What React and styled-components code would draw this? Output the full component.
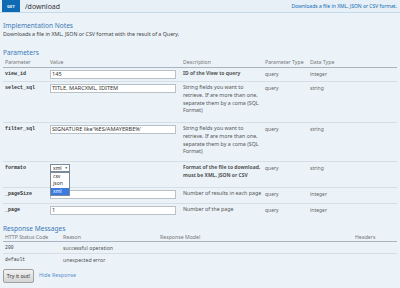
import React from "react";
import styled, { createGlobalStyle } from "styled-components";

const Global = createGlobalStyle`
  html, body { margin: 0; padding: 0; background: #ebf3f9; }
  body { font-family: "Noto Sans", "Open Sans", sans-serif; color: #444; }
  * { box-sizing: border-box; }
`;

const Page = styled.div`
  width: 400px;
  height: 288px;
  background: #ebf3f9;
  overflow: hidden;
`;

const Heading = styled.div`
  display: flex;
  align-items: center;
  height: 13px;
  background: #e7f0f7;
  border-bottom: 1px solid #c3d9ec;
  padding-right: 3px;
`;

const Badge = styled.span`
  display: flex;
  align-items: center;
  justify-content: center;
  width: 18px;
  height: 12px;
  margin-left: 2px;
  background: #0f6ab4;
  color: #fff;
  font-size: 4px;
  font-weight: bold;
  letter-spacing: 0.2px;
`;

const Path = styled.span`
  margin-left: 5px;
  font-size: 7px;
  color: #333;
  flex: 1;
`;

const Summary = styled.span`
  font-size: 5px;
  color: #0f6ab4;
`;

const Content = styled.div`
  padding: 9px 3px 0 3px;
`;

const SectionTitle = styled.div`
  font-size: 6.6px;
  line-height: 8px;
  color: #3c78b5;
  margin-top: ${(p) => p.$mt || 0}px;
`;

const Note = styled.div`
  font-size: 5.3px;
  line-height: 8px;
  color: #444;
`;

const ParamGrid = styled.div`
  display: grid;
  grid-template-columns: 47px 133px 82px 45px 1fr;
  height: ${(p) => p.$h}px;
  border-bottom: 1px solid ${(p) => (p.$head ? "#a9b4be" : p.$last ? "transparent" : "#d6dee6")};
  align-items: ${(p) => (p.$head ? "center" : "start")};
  padding-top: ${(p) => (p.$head ? 0 : 2)}px;
  position: relative;
`;

const HeadCell = styled.div`
  font-size: 5.2px;
  color: #777;
  padding-left: ${(p) => p.$pl || 0}px;
`;

const Name = styled.div`
  font-family: "Liberation Mono", "DejaVu Sans Mono", monospace;
  font-size: 5px;
  font-weight: bold;
  color: #333;
  line-height: 9px;
  padding-left: 2px;
`;

const Input = styled.div`
  width: 126px;
  height: 9px;
  background: #fff;
  border: 1px solid #b8c0c8;
  font-size: 5.6px;
  line-height: 7px;
  padding-left: 1px;
  color: #333;
  white-space: nowrap;
`;

const Desc = styled.div`
  font-size: ${(p) => (p.$bold ? 5 : 5.3)}px;
  line-height: 7.8px;
  color: #555;
  font-weight: ${(p) => (p.$bold ? "bold" : "normal")};
`;

const Cell = styled.div`
  font-size: 5px;
  line-height: 9px;
  color: #666;
`;

const SelectBox = styled.div`
  width: 20px;
  height: 8px;
  background: #fff;
  border: 1px solid #7a8a99;
  font-size: 5px;
  line-height: 6px;
  padding-left: 2px;
  color: #222;
  display: flex;
  gap: 3px;
  position: relative;
`;

const Arrow = styled.span`
  font-size: 3px;
  line-height: 6px;
`;

const Options = styled.div`
  position: absolute;
  left: -1px;
  top: 7px;
  width: 20px;
  background: #fff;
  border: 1px solid #7a8a99;
  z-index: 2;
`;

const Option = styled.div`
  font-size: 5px;
  line-height: 7.3px;
  padding-left: 2px;
  color: ${(p) => (p.$sel ? "#fff" : "#333")};
  background: ${(p) => (p.$sel ? "#3b7be0" : "#fff")};
`;

const RespGrid = styled.div`
  display: grid;
  grid-template-columns: 60px 97px 195px 1fr;
  height: ${(p) => p.$h}px;
  align-items: center;
  border-bottom: 1px solid ${(p) => (p.$head ? "#a9b4be" : p.$last ? "transparent" : "#d6dee6")};
  font-size: 5.2px;
  color: ${(p) => (p.$head ? "#777" : "#555")};
`;

const RCell = styled.div`
  padding-left: ${(p) => p.$pl || 0}px;
`;

const Code = styled.div`
  font-family: "Liberation Mono", "DejaVu Sans Mono", monospace;
  font-size: 4.8px;
  padding-left: 2px;
  color: #444;
`;

const Actions = styled.div`
  display: flex;
  align-items: center;
  gap: 5px;
  margin-top: 3px;
`;

const Button = styled.div`
  width: 31px;
  height: 14px;
  display: flex;
  align-items: center;
  justify-content: center;
  font-size: 5.3px;
  color: #333;
  background: linear-gradient(#f2f2f2, #d4d4d4);
  border: 1px solid #a0a0a0;
  border-radius: 2px;
`;

const Link = styled.span`
  font-size: 5.3px;
  color: #5a8fcc;
  margin-top: -2px;
`;

const params = [
  { name: "view_id", value: "145", desc: "ID of the View to query", bold: true, type: "integer", h: 14 },
  {
    name: "select_sql",
    value: "TITLE, MARCXML, IDITEM",
    desc: "String fields you want to retrieve. If are more than one, separate them by a coma (SQL Format)",
    type: "string",
    h: 41,
  },
  {
    name: "filter_sql",
    value: "SIGNATURE like'%ES/AMAYERBE%'",
    desc: "String fields you want to retrieve. If are more than one, separate them by a coma (SQL Format)",
    type: "string",
    h: 39,
  },
  { name: "formato", select: true, desc: "Format of the file to download, must be XML, JSON or CSV", bold: true, type: "string", h: 26 },
  { name: "_pageSize", value: "", desc: "Number of results in each page", type: "integer", h: 16 },
  { name: "_page", value: "1", desc: "Number of the page", type: "integer", h: 16, last: true },
];

export default function App() {
  return (
    <Page>
      <Global />
      <Heading>
        <Badge>GET</Badge>
        <Path>/download</Path>
        <Summary>Downloads a file in XML, JSON or CSV format.</Summary>
      </Heading>
      <Content>
        <SectionTitle>Implementation Notes</SectionTitle>
        <Note>Downloads a file in XML, JSON or CSV format with the result of a Query.</Note>
        <SectionTitle $mt={11}>Parameters</SectionTitle>
        <ParamGrid $head $h={11}>
          <HeadCell $pl={2}>Parameter</HeadCell>
          <HeadCell>Value</HeadCell>
          <HeadCell>Description</HeadCell>
          <HeadCell>Parameter Type</HeadCell>
          <HeadCell>Data Type</HeadCell>
        </ParamGrid>
        {params.map((p) => (
          <ParamGrid key={p.name} $h={p.h} $last={p.last}>
            <Name>{p.name}</Name>
            {p.select ? (
              <div>
                <SelectBox>
                  xml <Arrow>▼</Arrow>
                  <Options>
                    <Option>csv</Option>
                    <Option>json</Option>
                    <Option $sel>xml</Option>
                  </Options>
                </SelectBox>
              </div>
            ) : (
              <Input>{p.value}</Input>
            )}
            <Desc $bold={p.bold}>{p.desc}</Desc>
            <Cell>query</Cell>
            <Cell>{p.type}</Cell>
          </ParamGrid>
        ))}
        <SectionTitle $mt={5}>Response Messages</SectionTitle>
        <RespGrid $head $h={9}>
          <RCell $pl={2}>HTTP Status Code</RCell>
          <RCell>Reason</RCell>
          <RCell>Response Model</RCell>
          <RCell>Headers</RCell>
        </RespGrid>
        <RespGrid $h={12}>
          <Code>200</Code>
          <RCell>successful operation</RCell>
          <RCell />
          <RCell />
        </RespGrid>
        <RespGrid $h={12} $last>
          <Code>default</Code>
          <RCell>unexpected error</RCell>
          <RCell />
          <RCell />
        </RespGrid>
        <Actions>
          <Button>Try it out!</Button>
          <Link>Hide Response</Link>
        </Actions>
      </Content>
    </Page>
  );
}
